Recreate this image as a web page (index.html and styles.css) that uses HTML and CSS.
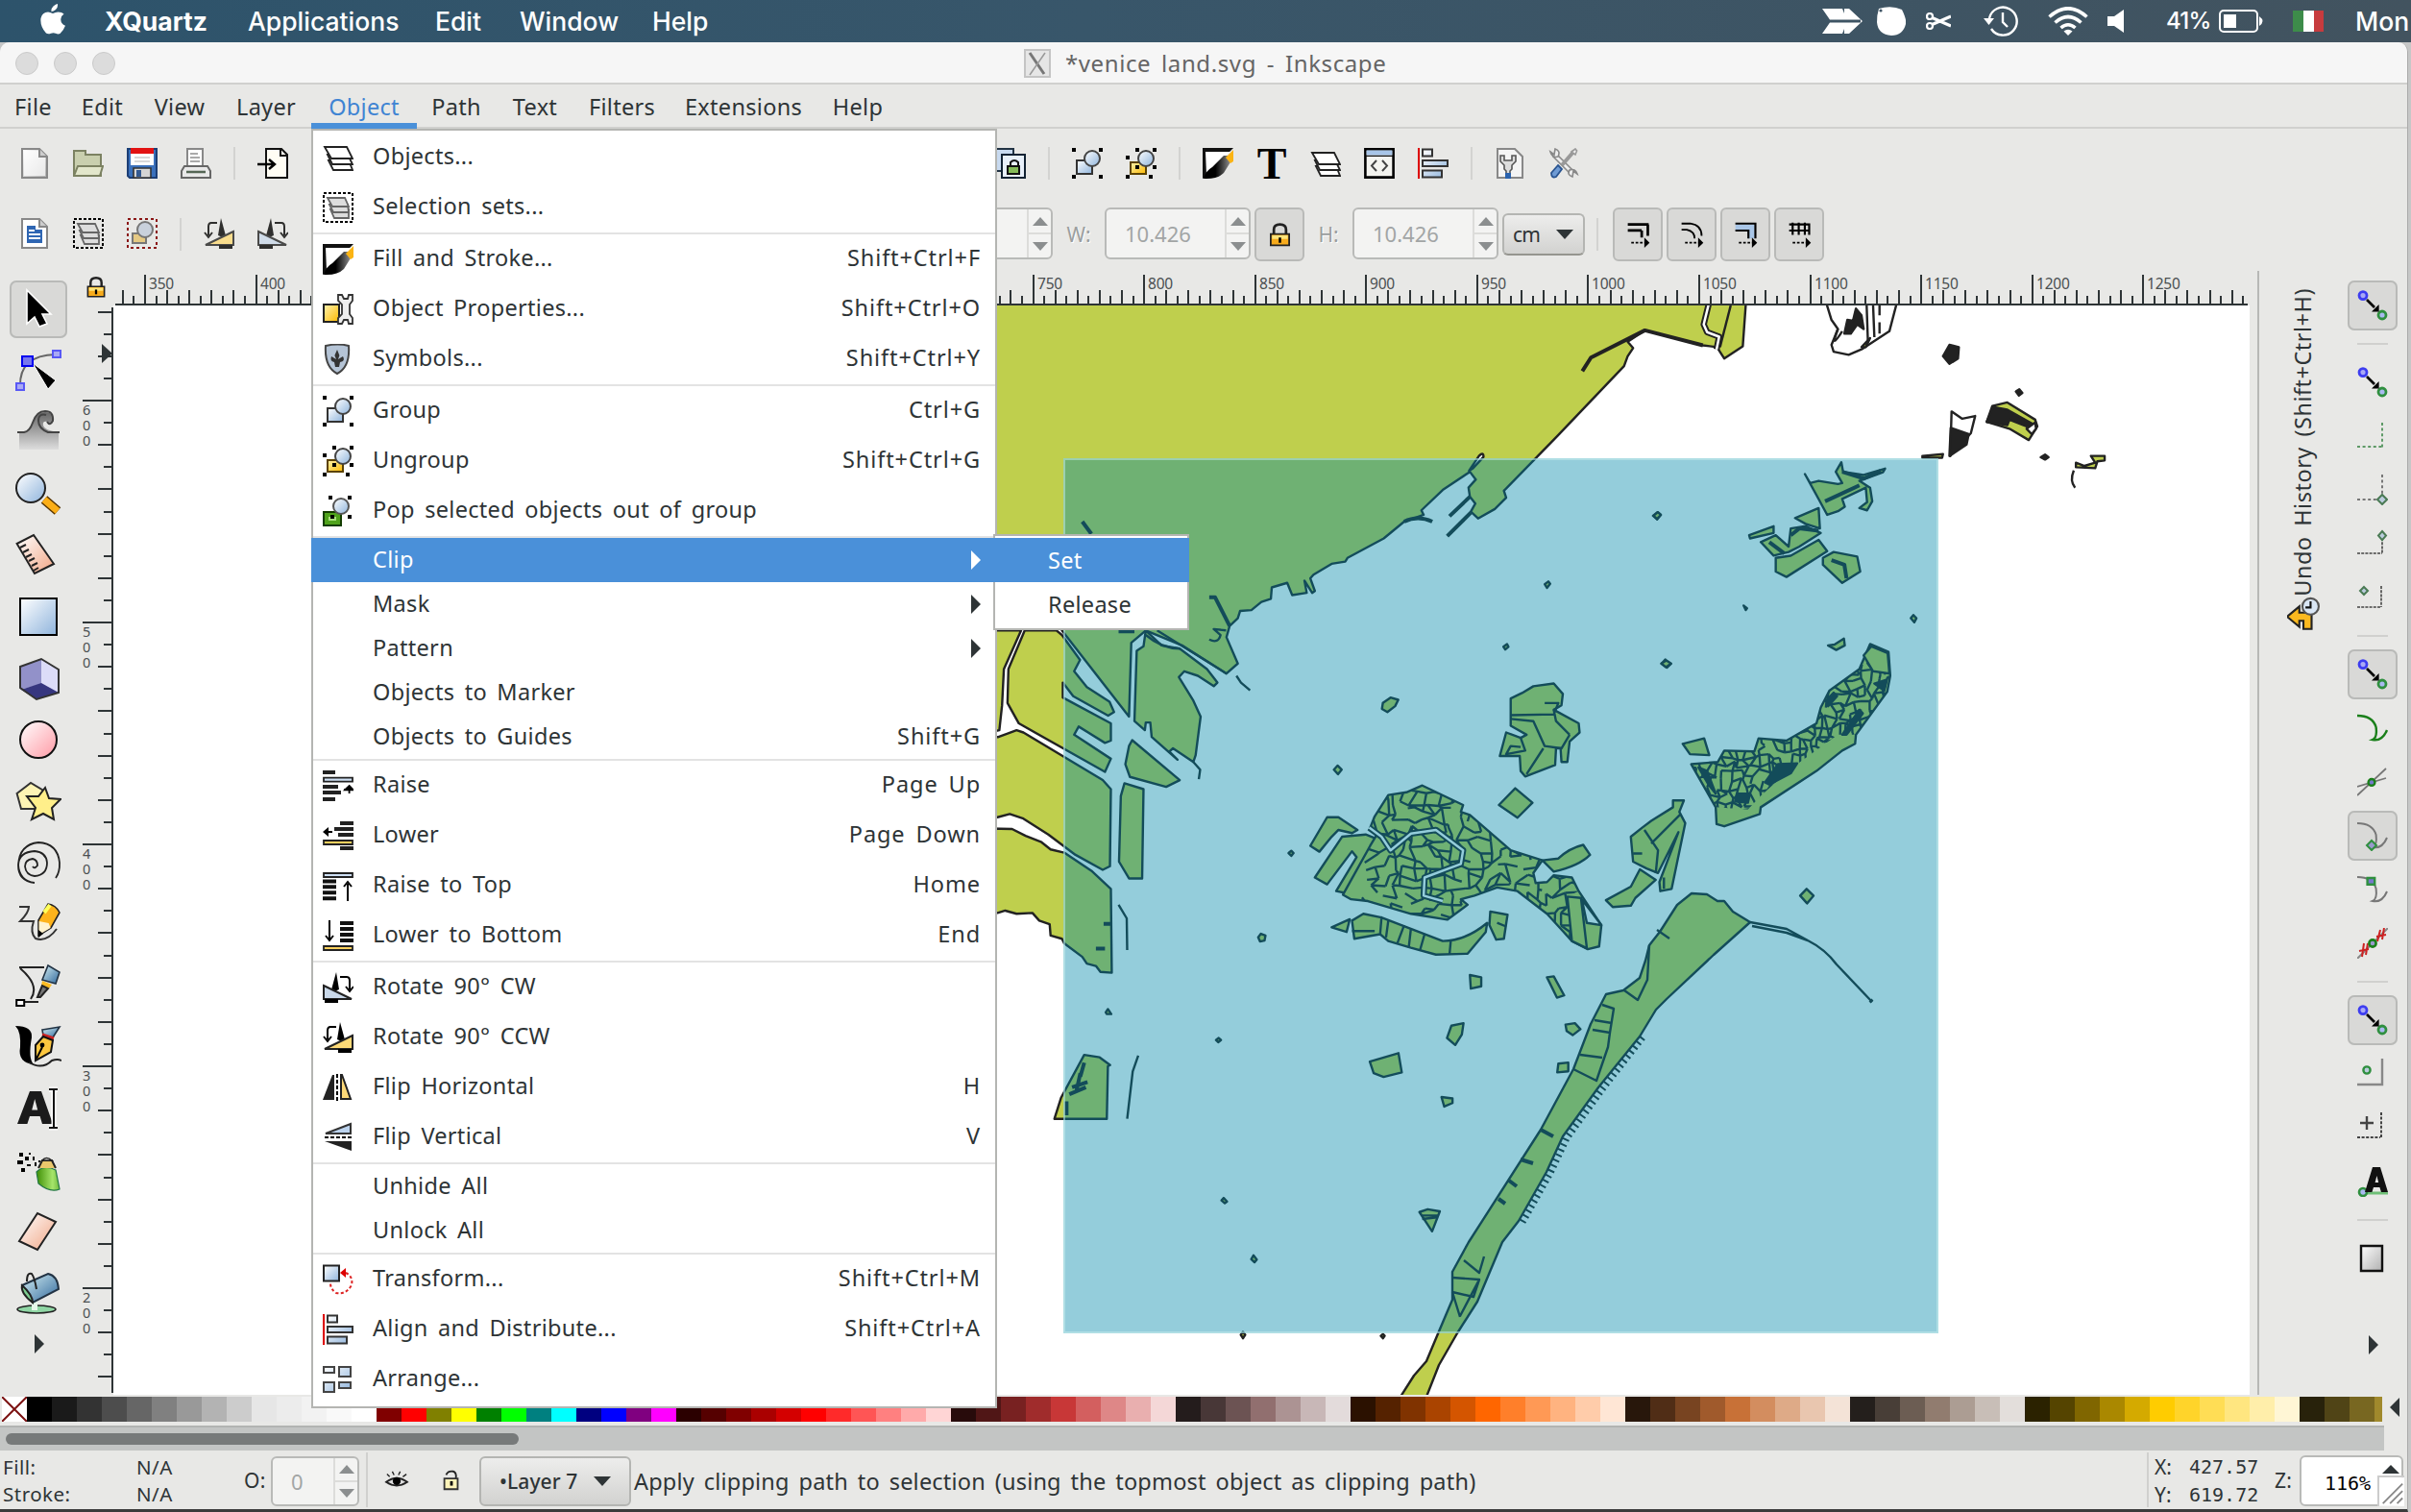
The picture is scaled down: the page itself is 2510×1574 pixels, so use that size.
FILE: index.html
```html
<!DOCTYPE html>
<html lang="en">
<head>
<meta charset="utf-8">
<title>*venice land.svg - Inkscape</title>
<link rel="stylesheet" href="styles.css">
</head>
<body>
<svg class="defs" width="0" height="0">
  <defs>
    <linearGradient id="gBlue" x1="0" y1="0" x2="1" y2="1"><stop offset="0" stop-color="#fff"/><stop offset="1" stop-color="#8fb4dc"/></linearGradient>
    <linearGradient id="gYellow" x1="0" y1="0" x2="1" y2="1"><stop offset="0" stop-color="#fff3b0"/><stop offset="1" stop-color="#fcb900"/></linearGradient>
    <linearGradient id="gPink" x1="0" y1="0" x2="1" y2="1"><stop offset="0" stop-color="#fff"/><stop offset="1" stop-color="#ff9aa5"/></linearGradient>
    <linearGradient id="gPeach" x1="0" y1="0" x2="1" y2="1"><stop offset="0" stop-color="#fff"/><stop offset="1" stop-color="#f0a584"/></linearGradient>
    <linearGradient id="gGrey" x1="0" y1="0" x2="1" y2="1"><stop offset="0" stop-color="#fff"/><stop offset="1" stop-color="#b0b0b0"/></linearGradient>
    <linearGradient id="gWave" x1="0" y1="0" x2="0" y2="1"><stop offset="0" stop-color="#666"/><stop offset="1" stop-color="#ddd"/></linearGradient>
    <linearGradient id="gInk" x1="1" y1="0" x2="0" y2="0"><stop offset="0" stop-color="#aaa"/><stop offset=".6" stop-color="#000"/></linearGradient>
    <linearGradient id="gSteel" x1="0" y1="0" x2="1" y2="1"><stop offset="0" stop-color="#d6f0f4"/><stop offset="1" stop-color="#2f679b"/></linearGradient>
    <linearGradient id="gGreen" x1="0" y1="0" x2="1" y2="0"><stop offset="0" stop-color="#3f8f05"/><stop offset=".7" stop-color="#a6e56b"/><stop offset="1" stop-color="#6fb93c"/></linearGradient>
  </defs>
  <symbol id="layers" viewBox="0 0 16 16"><g fill="#fff" stroke="#222" stroke-width=".9"><path d="M3 9.500l2.500 5h10l-2-5z"/><path d="M2.500 6.500l2.500 5h10.500L13 6.500z"/><path d="M1 2.500L4.500 8.500h11L12.500 2.500z"/></g></symbol>
  <symbol id="selset" viewBox="0 0 16 16"><path d="M.5.500h15v15H.5z" fill="none" stroke="#000" stroke-dasharray="1.500 1"/><g fill="#ddd" stroke="#666" stroke-width=".9"><path d="M4 9l2 4.500h7.500V9z"/><path d="M3.500 6.500l2 4h8l-.5-4z"/><path d="M2.500 3L5 7.500h8.500L11.500 3z"/></g></symbol>
  <symbol id="selgrp" viewBox="0 0 16 16"><path d="M.5.500h15v15H.5z" fill="none" stroke="#8a1616" stroke-dasharray="1.500 1.500"/><path d="M3 8h7v5H3z" fill="#e5c983" stroke="#777"/><circle cx="9.500" cy="6" r="4" fill="#c9d1dc" stroke="#777"/></symbol>
  <symbol id="fill" viewBox="0 0 16 16"><path d="M0 0h16L1 15.500 0 16z" fill="#111"/><path d="M1.500 2h13L2 14z" fill="#fff"/><path d="M.5 16q1-4 4.500-6l6-6h3l2 1-5 8q-3 3-9 3z" fill="url(#gInk)"/><path d="M12 5l4-4v6l-1.500 1z" fill="#fbb414"/></symbol>
  <symbol id="props" viewBox="0 0 16 16"><path d="M.5 5.500h8v9h-8z" fill="url(#gYellow)" stroke="#222"/><path d="M8 .5v3l2 2v5l-2 2v3h2l1-2h2l.5 2h2v-3l-1.500-2v-5l1.500-2v-3h-2l-.5 2h-2l-1-2z" fill="#eee" stroke="#333" stroke-width=".9"/></symbol>
  <symbol id="shield" viewBox="0 0 16 16"><path d="M1.500 1Q8-.5 13.500 1q.8 11-6 14.500Q.8 12 1.500 1z" fill="#b5c4d6" stroke="#444"/><path d="M7.500 3l1.200 3-.7 2 2.500-1.500q1.500 2.500-1.500 3l-.5 2.500h-2L6 9.500Q3.500 9 4.500 6.500L7 8 6.200 6z" fill="#333"/></symbol>
  <symbol id="group" viewBox="0 0 16 16"><path d="M2.500 6.500h8v7h-8z" fill="url(#gBlue)" stroke="#333"/><circle cx="10.500" cy="5.500" r="4" fill="url(#gBlue)" stroke="#444"/><path d="M0 0h2v2H0zM14 0h2v2h-2zM0 14h2v2H0zM14 14h2v2h-2z"/></symbol>
  <symbol id="ungroup" viewBox="0 0 16 16"><path d="M2.500 7.500h8v6h-8z" fill="url(#gYellow)" stroke="#5c4300"/><circle cx="10.500" cy="5.500" r="4" fill="url(#gBlue)" stroke="#444"/><path d="M5 0h2v2H5zM14 0h2v2h-2zM0 4h2v2H0zM14 9h2v2h-2zM0 14h2v2H0zM12 14h2v2h-2zM5 9h2v2H5z"/></symbol>
  <symbol id="pop" viewBox="0 0 16 16"><path d="M.5 8.500h9v7h-9z" fill="#4fa31c" stroke="#143d00"/><path d="M3 11h4v2H3z" fill="#a7e07c"/><circle cx="9.500" cy="5.500" r="4" fill="url(#gBlue)" stroke="#555"/><path d="M3 0h2v2H3zM13 0h2v2h-2zM4 10h2v2H4zM13 10h2v2h-2z"/></symbol>
  <symbol id="raise" viewBox="0 0 16 16"><path d="M0 1h6.500M0 8.500h8M0 11.500h9.500M0 15h6.500" stroke="#222" stroke-width="1.900"/><path d="M.5 3.800h15v2H.5z" fill="#cfe0f5" stroke="#222" stroke-width=".9"/><path d="M11 10h3M13.800 8l2.200 2.200h-4.500zM13.800 9v3" stroke="#000" stroke-width=".9"/></symbol>
  <symbol id="lower" viewBox="0 0 16 16"><path d="M9 1.500h7M6 4.500h10M8 7.500h8M9 14.500h7" stroke="#222" stroke-width="2"/><path d="M.5 10.500h15v2H.5z" fill="#fdd15e" stroke="#222" stroke-width=".9"/><path d="M0 6l3-2.500v2h2v1H3v2z"/></symbol>
  <symbol id="top" viewBox="0 0 16 16"><path d="M0 5.800h7M0 8.600h7M0 11.600h7M0 14.600h7" stroke="#111" stroke-width="2"/><path d="M.5 1.500h15v2H.5z" fill="#cfe0f5" stroke="#222" stroke-width=".9"/><path d="M13 16V7M11 8.500l2-2.500 2 2.500" fill="none" stroke="#000"/></symbol>
  <symbol id="bottom" viewBox="0 0 16 16"><path d="M9 1.500h7M9 4.500h7M9 7.500h7M9 10.500h7" stroke="#111" stroke-width="2"/><path d="M.5 13.500h15v2H.5z" fill="#fdd15e" stroke="#222" stroke-width=".9"/><path d="M3.500 0v10M1.500 8l2 2.500 2-2.500" fill="none" stroke="#000"/></symbol>
  <symbol id="rotcw" viewBox="0 0 16 16"><path d="M7 0l1.500 9L4 11z"/><path d="M.5 7L15 14H.5z" fill="#cad9ea" stroke="#222"/><path d="M1 14h7v2H1z"/><path d="M9 2.500h3.500q1.500 0 1.500 2V9M12 7.500l2 2.500 2-2.500" fill="none" stroke="#000"/></symbol>
  <symbol id="rotccw" viewBox="0 0 16 16"><path d="M9 0L7.500 9l4.500 2z"/><path d="M15.500 7L1 14h14.500z" fill="#fdda77" stroke="#222"/><path d="M8 14h7v2H8z"/><path d="M7 2.500H4Q2.500 2.500 2.500 4.500V9M.5 7.500l2 2.500 2-2.500" fill="none" stroke="#000"/></symbol>
  <symbol id="fliph" viewBox="0 0 16 16"><path d="M0 14.500h6V1.500H5z" fill="#222"/><path d="M9.500 14h5L10 1.500h-.5z" fill="#fdd978" stroke="#222"/><path d="M7.500 1v14" stroke="#000" stroke-dasharray="2 1"/></symbol>
  <symbol id="flipv" viewBox="0 0 16 16"><path d="M14.500 1v5H1.500z" fill="#bcd3ee" stroke="#333"/><path d="M15 15V10H1z" fill="#222"/><path d="M1 8h14" stroke="#000" stroke-dasharray="2 1"/></symbol>
  <symbol id="transform" viewBox="0 0 16 16"><path d="M.5.800h8v8h-8z" fill="url(#gBlue)" stroke="#222"/><path d="M12 4.500q4 2 3 6.500-3 5-8 4-3-2-3-5" fill="none" stroke="#d22" stroke-dasharray="1.500 1.200"/><path d="M9 4.500l3-2.500v5z" fill="#d00"/></symbol>
  <symbol id="align" viewBox="0 0 16 16"><path d="M.5 0v16" stroke="#d00"/><g fill="url(#gBlue)" stroke="#333"><path d="M2.500.800h5v3.500h-5zM2.500 6.500h13v3h-13zM2.500 11.800h10v3.500h-10z"/></g></symbol>
  <symbol id="arrange" viewBox="0 0 16 16"><g fill="url(#gBlue)" stroke="#444"><path d="M.5 1.500h5.500v3H.5zM8.500 1.500h6v5h-6zM.5 9.500h5.500v5H.5zM8.500 9.500h6v3h-6z"/></g></symbol>
  <symbol id="new" viewBox="0 0 16 16"><path d="M1.500.500h9l4 4v11h-13z" fill="url(#gGrey)" stroke="#888"/><path d="M2.500 1.500h8v3h3v10h-11z" fill="#fff" opacity=".7"/><path d="M10.500.500v4h4" fill="#ccc" stroke="#888"/></symbol>
  <symbol id="open" viewBox="0 0 16 16"><path d="M.5 14.500v-13h6v2h8v11z" fill="#c9cfae" stroke="#7c8262"/><path d="M2.500 9.500h13l-1.500 5H.5z" fill="#e2e6cb" stroke="#7c8262"/></symbol>
  <symbol id="save" viewBox="0 0 16 16"><path d="M.5.500h15v15h-14l-1-1z" fill="#3a70bb" stroke="#1c3e75"/><path d="M2 0h12v9H2z" fill="#fff"/><path d="M2 0h12v3H2z" fill="#e21212"/><path d="M4 5h8M4 7h8" stroke="#ccc" stroke-width=".7"/><path d="M3.500 10.500h9v5h-9z" fill="#d5d5d5" stroke="#333" stroke-width=".8"/><path d="M5 11.500h2.500V15H5z" fill="#345a91"/></symbol>
  <symbol id="print" viewBox="0 0 16 16"><path d="M3.500.500h8v9h-8z" fill="#fff" stroke="#888"/><path d="M5 3h4M5 5h5M5 7h5" stroke="#aaa"/><path d="M2 9.500h12l1.500 2.500v3.500H.5V12z" fill="#e9e9e9" stroke="#666"/><path d="M3 12.500h10" stroke="#565" stroke-width="1.200"/></symbol>
  <symbol id="import" viewBox="0 0 16 16"><path d="M4.500.500h8l3 3v12h-11z" fill="#fffdf4" stroke="#111"/><path d="M12 .5v3.500h3.500" fill="none" stroke="#111"/><path d="M0 8.500h8M6 6l3 2.500L6 11" fill="none" stroke="#000" stroke-width="1.200"/></symbol>
  <symbol id="clone" viewBox="0 0 16 16"><path d="M0 .5h9.500V12H0z" fill="#c8daf0" stroke="#234"/><path d="M3.500 3.500h12v12h-12z" fill="#e8f0fa" stroke="#123"/><path d="M6.500 9.500h6v4h-6z" fill="#86bb59" stroke="#111"/><path d="M8 9V7.500q2-2 4 0V9" fill="none" stroke="#111"/></symbol>
  <symbol id="xml" viewBox="0 0 16 16"><path d="M.7.700h14.600v14.600H.7z" fill="#f4f4f0" stroke="#000" stroke-width="1.300"/><path d="M1.300 1.300h13.400v2.500H1.300z" fill="#a8c5e8"/><path d="M1 4.200h14" stroke="#111" stroke-width=".7"/><path d="M6.500 6.500L4 9.300 6.500 12M9.500 6.500L12 9.300 9.500 12" fill="none" stroke="#444"/></symbol>
  <symbol id="docprefs" viewBox="0 0 16 16"><path d="M1.500.500h9l4 4v11h-13z" fill="#f4f4f4" stroke="#888"/><path d="M3 4v3l2 2v2l1 1v3h2v-3l1-1V9l2-2V4H9v2.500H5V4z" fill="#ddd" stroke="#555" stroke-width=".8"/><path d="M5.500 13h3v3h-3z" fill="#2a62ad"/></symbol>
  <symbol id="prefs" viewBox="0 0 16 16"><path d="M3 3.500l9.500 9.500" stroke="#888" stroke-width="3"/><path d="M3 3.500l9.500 9.500" stroke="#eee" stroke-width="1.400"/><path d="M1 2l2 1.500L3.500.5q3 1 1.500 4-3 1-4-2.500zM15 13.500l-2-1.500-.5 3q-3-1-1.500-3.500 3-1 4 2z" fill="#eee" stroke="#888" stroke-width=".8"/><path d="M13.500 1.500L7 9" stroke="#999" stroke-width="2"/><path d="M12 2l2-1.500.8 1L14 3.500z" fill="#eee" stroke="#999" stroke-width=".8"/><path d="M5 9l2 2-3 4q-2.500 1-2.500-2z" fill="#6f9bd4" stroke="#2a5591" stroke-width=".9"/></symbol>
  <symbol id="seldoc" viewBox="0 0 16 16"><path d="M1.500.500h9l4 4v11h-13z" fill="#fff" stroke="#888"/><path d="M10.500.500v4h4" fill="#ccc" stroke="#888"/><path d="M4 4h4.500v2H12v7H4z" fill="#2f66b3"/><path d="M5 6.500h3M5 8.500h6M5 10.500h6" stroke="#fff"/></symbol>
  <symbol id="lock" viewBox="0 0 16 16"><path d="M4.500 8V5q0-3 3.500-3t3.500 3v3" fill="none" stroke="#222" stroke-width="1.500"/><path d="M2.700 7.500h10.600v6.500H2.700z" fill="#f7ab1c" stroke="#222"/><path d="M3.500 8.300h9v2h-9z" fill="#ffe47a"/><path d="M7.300 9.500h1.400v3H7.300z"/></symbol>
  <symbol id="m1" viewBox="0 0 16 16"><path d="M2 2h12M2 5.500h8M13.500 2v6.500M10 5.500v4" stroke="#000" stroke-width="1.500" fill="none"/><path d="M4 12.500h8" stroke="#000" stroke-dasharray="1.500 1"/><path d="M11.500 9.500l3 3-3 3z"/></symbol>
  <symbol id="m2" viewBox="0 0 16 16"><path d="M2 1.500h5q6.500 1 6.500 7M2 5h3q4.500 1 4.500 5" stroke="#000" fill="none"/><path d="M4 12.500h8" stroke="#000" stroke-dasharray="1.500 1"/><path d="M11.500 9.500l3 3-3 3z"/></symbol>
  <symbol id="m3" viewBox="0 0 16 16"><path d="M2 2h11v8H9V5.500H2z" fill="#a9c6e7"/><path d="M2 1.500h11.500v8.500M2 5.500h7.500v4.500" stroke="#000" fill="none" stroke-width="1.200"/><path d="M4 12.500h8" stroke="#000" stroke-dasharray="1.500 1"/><path d="M11.500 9.500l3 3-3 3z"/></symbol>
  <symbol id="m4" viewBox="0 0 16 16"><path d="M2 2h11.500v6M2 5.500h11.500M4 1v7M7.500 1v7M11 1v7" stroke="#000" fill="none" stroke-width="1.200"/><path d="M4 12.500h8" stroke="#000" stroke-dasharray="1.500 1"/><path d="M11.500 9.500l3 3-3 3z"/></symbol>
  <symbol id="snap" viewBox="0 0 16 16"><circle cx="3" cy="2.800" r="2" fill="#a9a9f5" stroke="#3d3df0" stroke-width="1.400"/><circle cx="13" cy="13" r="2" fill="#a9b9f0" stroke="#2f8f3f" stroke-width="1.400"/><path d="M5 5l4 4" stroke="#000" stroke-width="1.300"/><path d="M11.300 11.300H7.500l3.800-3.800z"/></symbol>
  <symbol id="s1" viewBox="0 0 16 16"><path d="M13 1v13M0 13.500h13" fill="none" stroke="#5e9a67" stroke-dasharray="1.500 1.300"/></symbol>
  <symbol id="s2" viewBox="0 0 16 16"><path d="M13 0v11M0 13h11" fill="none" stroke="#777" stroke-dasharray="1.500 1.300"/><path d="M13 10.500l2.500 2.500-2.500 2.500-2.500-2.500z" fill="#bcd" stroke="#4a7a54"/></symbol>
  <symbol id="s3" viewBox="0 0 16 16"><path d="M13 5v8M0 13h13" fill="none" stroke="#444" stroke-dasharray="1.500 .6" stroke-width=".8"/><path d="M13 1.500l2 2.300-2 2.300-2-2.300z" fill="#bcd" stroke="#4a7a54"/></symbol>
  <symbol id="s4" viewBox="0 0 16 16"><path d="M12.500 2v11M0 13h12" fill="none" stroke="#444" stroke-dasharray="1.500 .6" stroke-width=".8"/><path d="M3.500 2.500l2 2-2 2-2-2z" fill="#bcd" stroke="#4a7a54"/></symbol>
  <symbol id="s5" viewBox="0 0 16 16"><path d="M0 1.500q8 0 9.800 6Q10.500 13 8 14q5 1 7.500-5" fill="none" stroke="#1a7f1a" stroke-width="1.200"/></symbol>
  <symbol id="s6" viewBox="0 0 16 16"><path d="M0 15L15 1M0 10.500L15 6" stroke="#777" stroke-width=".9"/><circle cx="7.500" cy="8.200" r="1.700" fill="#77c" stroke="#1a7f1a" stroke-width="1.200"/></symbol>
  <symbol id="s7" viewBox="0 0 16 16"><path d="M0 1.500q8 0 9.800 6Q10.500 13 8 14q5 1 7.500-5" fill="none" stroke="#777"/><path d="M7.500 10.500l2.500 2.500-2.500 2.500L5 13z" fill="#99c" stroke="#2f8f3f"/></symbol>
  <symbol id="s8" viewBox="0 0 16 16"><path d="M0 1.500q8 0 9.800 6Q10.500 13 8 14q5 1 7.500-5" fill="none" stroke="#777"/><path d="M5.300 2h3.800v3.400H5.300z" fill="#77c" stroke="#2f8f3f" stroke-width="1.200"/></symbol>
  <symbol id="s9" viewBox="0 0 16 16"><path d="M0 16L16 0" stroke="#888"/><path d="M2.500 15l1-7M4.500 14l1-6M1 12l5-1M10.500 7l1.500-6M13 6l1-6M10 4.500l5-1" stroke="#c22"/><circle cx="8" cy="8" r="1.800" fill="#99c" stroke="#1a7f1a" stroke-width="1.300"/></symbol>
  <symbol id="s10" viewBox="0 0 16 16"><path d="M13 0v13.500H0" fill="none" stroke="#888" stroke-width="1.200"/><circle cx="5" cy="6" r="1.800" fill="#bcd" stroke="#2f8f3f" stroke-width="1.200"/></symbol>
  <symbol id="s11" viewBox="0 0 16 16"><path d="M12.500 0v13M0 13h12" fill="none" stroke="#444" stroke-dasharray="1.500 .8"/><path d="M5 2v7M1.500 5.500h7" stroke="#444" stroke-width="1.200"/></symbol>
  <symbol id="s12" viewBox="0 0 16 16"><path d="M3 14h13" stroke="#6fbf77" stroke-width="1.500"/><circle cx="3" cy="13.500" r="2" fill="#a9b9f0" stroke="#2f8f3f" stroke-width="1.300"/><path d="M4 13.500L8 .5h4l4 13h-3.500l-.8-2.500H8.500L7.700 13.500zM9.300 8.500h1.800L10.200 5z" fill-rule="evenodd" fill="#111"/></symbol>
  <symbol id="s13" viewBox="0 0 16 16"><path d="M2 1.500h11v13H2z" fill="url(#gGrey)" stroke="#111" stroke-width="1.200"/></symbol>
  <symbol id="undo" viewBox="0 0 16 16"><path d="M0 9.500l6-5v3h6v8H8v-4H6v3z" fill="#fbb91f" stroke="#222"/><circle cx="11.500" cy="4.500" r="4" fill="#d9e6f5" stroke="#555"/><path d="M11.500 2v3H9" fill="none" stroke="#111"/></symbol>
</svg>

<header class="macbar">
  <svg class="apple" viewBox="0 0 26 32"><path d="M18 0q.5 4-2 6t-4.500 2Q11 5 13.500 2.500T18 0zM24.500 10.500Q21 13 21.300 16.500 21.500 21 26 22.700 24 28 20.500 31q-2 1-4.500-.3-2.500-1-5 .1Q8 32 6 30.500-.5 23.500.5 15 2 8.500 8 8.500q2 .1 5 1.500 3-1.500 5.500-1.500 4 .2 6 2z" fill="#fff"/></svg>
  <b class="mb-app">XQuartz</b><span class="mb-2">Applications</span><span class="mb-3">Edit</span><span class="mb-4">Window</span><span class="mb-5">Help</span>
  <div class="tray">
    <svg class="t1" viewBox="0 0 42 26"><path d="M0 0h21l2 5V0h5l14 13-14 13h-5v-5l-2 5H0l8-11.500H40v-3H8z" fill="#fff"/></svg>
    <svg class="t2" viewBox="0 0 30 30"><path d="M2 2q13-4 24 1 5 10 4 15-3 12-15 12Q1 29 0 16 0 8 2 2z" fill="#fff"/><circle cx="4" cy="4" r="1.600" fill="#3f5465"/></svg>
    <svg class="t3" viewBox="0 0 26 18"><g fill="none" stroke="#fff" stroke-width="2.200"><circle cx="4" cy="4" r="3"/><circle cx="4" cy="14" r="3"/><path d="M6.500 5.500L26 14M6.500 12.500L26 4" stroke-width="3"/></g></svg>
    <svg class="t4" viewBox="0 0 36 32"><g fill="none" stroke="#fff" stroke-width="2.400"><path d="M6 13A14.500 14.500 0 1 1 8 24"/><path d="M20 7v10l5 5"/></g><path d="M0 13h11l-5.500 7z" fill="#fff"/></svg>
    <svg class="t5" viewBox="0 0 42 30"><g fill="none" stroke="#fff" stroke-width="3.600"><path d="M1.500 10.500Q21-7 40.500 10.500"/><path d="M7.500 16.500Q21 4.500 34.500 16.500"/><path d="M13.500 22Q21 15.500 28.500 22"/></g><path d="M21 30l-4.500-4.500q4.500-3.500 9 0z" fill="#fff"/></svg>
    <svg class="t6" viewBox="0 0 17 24"><path d="M0 7h7l10-7v24L7 17H0z" fill="#fff"/></svg>
    <span class="t7">41%</span>
    <svg class="t8" viewBox="0 0 46 24"><rect x="1" y="1" width="39" height="22" rx="4" fill="none" stroke="#fff" stroke-width="2"/><path d="M5 5h13v14H5z" fill="#fff"/><path d="M42 7q7 5 0 10z" fill="#fff"/></svg>
    <svg class="t9" viewBox="0 0 32 22"><path d="M0 0h11v22H0z" fill="#3d8c4a"/><path d="M11 0h11v22H11z" fill="#fff"/><path d="M22 0h10v22H22z" fill="#c73b3e"/></svg>
    <span class="t10">Mon</span>
  </div>
</header>

<div class="window">
  <div class="titlebar"><i class="light"></i><i class="light"></i><i class="light"></i>
    <div class="title"><svg width="28" height="30" viewBox="0 0 28 30"><path d="M1 1h26v28H1z" fill="#e6e6e6" stroke="#c4c4c4" stroke-width="2"/><path d="M6 4l15 22" stroke="#777" stroke-width="3"/><path d="M22 4L6 27" stroke="#999" stroke-width="1.500"/></svg><span>*venice land.svg - Inkscape</span></div>
  </div>
  <nav class="menubar"><span class="w69">File</span><span class="w75">Edit</span><span class="w86">View</span><span class="w94">Layer</span><span class="w110 active">Object</span><span class="w82">Path</span><span class="w82">Text</span><span class="w99">Filters</span><span class="w154">Extensions</span><span class="w84">Help</span></nav>

  <div class="commands">
    <svg class="ic"><use href="#new"/></svg><svg class="ic"><use href="#open"/></svg><svg class="ic"><use href="#save"/></svg><svg class="ic"><use href="#print"/></svg><i class="vs"></i><svg class="ic"><use href="#import"/></svg>
    <i class="gapbig"></i>
    <svg class="ic"><use href="#clone"/></svg><i class="vs"></i><svg class="ic"><use href="#group"/></svg><svg class="ic"><use href="#ungroup"/></svg><i class="vs"></i><svg class="ic"><use href="#fill"/></svg><span class="ic bigT">T</span><svg class="ic"><use href="#layers"/></svg><svg class="ic"><use href="#xml"/></svg><svg class="ic"><use href="#align"/></svg><i class="vs"></i><svg class="ic"><use href="#docprefs"/></svg><svg class="ic"><use href="#prefs"/></svg>
  </div>

  <div class="options">
    <div class="optleft"><svg class="ic"><use href="#seldoc"/></svg><svg class="ic"><use href="#selset"/></svg><svg class="ic"><use href="#selgrp"/></svg><i class="vs"></i><svg class="ic dim"><use href="#rotccw"/></svg><svg class="ic dim"><use href="#rotcw"/></svg></div>
    <div class="spin"><span></span><i class="updown"><b></b><b></b></i></div>
    <label class="dimlabel w54">W:</label>
    <div class="spin"><span>10.426</span><i class="updown"><b></b><b></b></i></div>
    <div class="tog"><svg class="ic"><use href="#lock"/></svg></div>
    <label class="dimlabel w50">H:</label>
    <div class="spin"><span>10.426</span><i class="updown"><b></b><b></b></i></div>
    <div class="combo cm">cm<i class="down"></i></div>
    <i class="vs tall"></i>
    <div class="tog"><svg class="ic"><use href="#m1"/></svg></div><div class="tog"><svg class="ic"><use href="#m2"/></svg></div><div class="tog"><svg class="ic"><use href="#m3"/></svg></div><div class="tog"><svg class="ic"><use href="#m4"/></svg></div>
  </div>

  <main class="work">
    <div class="toolbox">
      <div class="tool on"><svg viewBox="0 0 24 24"><path d="M6 2v17.500l4-3.500 2.500 5 4-1.500-2.500-5h4.500z" fill="#000" stroke="#fff" stroke-width=".8"/></svg></div>
      <div class="tool"><svg viewBox="0 0 24 24"><path d="M2.500 20Q2 4 21 3.500" fill="none" stroke="#666"/><path d="M9 8l12 9-4 4.500z" fill="#000" stroke="#fff" stroke-width=".5"/><g fill="#a9a9f5" stroke="#5858f5"><path d="M.5 18.500h4v3.500h-4zM19.500 1.500h4v3.500h-4z"/><path d="M3.500 4.500h5.500v5H3.500z" stroke="#0000f0" fill="#7777ee"/></g></svg></div>
      <div class="tool"><svg viewBox="0 0 24 24"><path d="M2 12h2.500q3-.5 4.500-5Q11 1.500 15.500 1.500t4 4.500q-1.500 3-3 .5-2.500-.5-2 2t8 3.500v9H2z" fill="url(#gWave)"/><path d="M1 12h3.500q3-.5 4.500-5Q11 1 15.500 1t4 5q-1.500 3-3 .5M16 3q-4-1-4 3t5 6h6" fill="none" stroke="#444"/></svg></div>
      <div class="tool"><svg viewBox="0 0 24 24"><path d="M15 15l7 6" stroke="#553300" stroke-width="5"/><path d="M15 15l7 6" stroke="#fbae17" stroke-width="3.500"/><circle cx="8" cy="9" r="7.500" fill="url(#gBlue)" stroke="#222"/></svg></div>
      <div class="tool"><svg viewBox="0 0 24 24"><path d="M.8 6L9.500 1.500 20 16.500l-10 5z" fill="url(#gPeach)" stroke="#222"/><path d="M2.500 8l3-1.500M4 10.500l3-1.500M5.500 13l3-1.500M7 15l3-1.500M8.500 17.500l3-1.500M9.500 20l2.500-1.500" stroke="#222"/></svg></div>
      <div class="tool"><svg viewBox="0 0 24 24"><path d="M2.500 2.500h19v19h-19z" fill="url(#gBlue)" stroke="#000"/></svg></div>
      <div class="tool"><svg viewBox="0 0 24 24"><path d="M2.500 6l11-4 9 5.500v12L11 23 2.500 17z" fill="#dcdcf8"/><path d="M2.500 6l11-4v13L2.500 18z" fill="#9291c9"/><path d="M13.500 14.500l9 5L11 23l-8-5z" fill="#36367f"/><path d="M2.500 6l11-4 9 5.500v12L11 23 2.500 17z" fill="none" stroke="#333"/></svg></div>
      <div class="tool"><svg viewBox="0 0 24 24"><circle cx="12" cy="12" r="9.500" fill="url(#gPink)" stroke="#111"/></svg></div>
      <div class="tool"><svg viewBox="0 0 24 24"><path d="M.8 8L8 2.500 15.500 7l-2.500 9H3z" fill="#fdf4b4" stroke="#333"/><path d="M6 9.500h6l3.500-4.500 2 5.500 6 .5-4.500 4.500 1 6-5.500-3-6 3 2-6z" fill="#ffef8a" stroke="#222"/></svg></div>
      <div class="tool"><svg viewBox="0 0 24 24"><path d="M9 14q1 1.500 2.500-.5 0-3-2.500-3.500-4 .5-4 4 .5 4.500 5 5 6.500-.5 6.500-7Q16 6.500 10 6 2 6.500 1.500 13 2 21.500 10 22.500M10 22.500Q1.500 21.500 1.500 13.500 2 2.500 12 1.500q10 .5 11 10.500.2 5-2 8" fill="none" stroke="#222" stroke-width=".9"/></svg></div>
      <div class="tool"><svg viewBox="0 0 24 24"><path d="M2 3h5q0 3-4.500 7.500h7q-2 6 1 9 6 2 11-5" fill="none" stroke="#333"/><path d="M12 18V10l5-8.500q4 .5 6 4.500L18.500 14z" fill="#fdb31c" stroke="#222" stroke-width=".8"/><path d="M12.300 10.500l5 1 1 2.500-6 3.500z" fill="#fff3cf"/><path d="M15 6l3-4" stroke="#ffff5a" stroke-width="2"/><path d="M12 19v-4l2.500 2z"/></svg></div>
      <div class="tool"><svg viewBox="0 0 24 24"><path d="M2 2.500h13M2.500 3Q13 12 8 19M3 20.500h9" fill="none" stroke="#222"/><path d="M17 1.500l6 3.500-2 6-7-2z" fill="url(#gSteel)" stroke="#234" stroke-width=".8"/><path d="M14 9.500l5 2-1.500 2-4-1.500z" fill="#fbbb22"/><path d="M14 12l-2.500 6h1.500l4-4.500z" fill="#777" stroke="#222"/><path d="M.6 19.500h4v3h-4z" fill="#fff" stroke="#000"/></svg></div>
      <div class="tool"><svg viewBox="0 0 24 24"><path d="M0 1q9 0 8.500 6-2 11 1 14Q1 20 2.500 12 3 4 0 1z"/><path d="M7 20q7 4 12-1 3-1 5 0" fill="none" stroke="#222"/><path d="M14 3l9-1.500L19.500 7l-5-1z" fill="url(#gSteel)" stroke="#234" stroke-width=".8"/><path d="M14 5.500l6 2" stroke="#c22" stroke-width="1.500"/><path d="M10.500 19V11l4-4.500 5 2-1 6z" fill="#fdc73f" stroke="#111"/><path d="M11 18l3-6" stroke="#000"/><circle cx="14" cy="11" r="1.200"/></svg></div>
      <div class="tool"><svg viewBox="0 0 24 24"><path d="M1 20L7.500 3h6l6 17h-5.500l-1.200-4H7.500L6.200 20zM8.600 12.800h3L10.100 7z" fill="#1b1b1b" fill-rule="evenodd"/><path d="M17.500 2h4.500M17.500 22h4.500M20 2v20" stroke="#fff" stroke-width="2.500"/><path d="M17.500 2h4.500M17.500 22h4.500M20 2v20" stroke="#111"/></svg></div>
      <div class="tool"><svg viewBox="0 0 24 24"><path d="M2 3h2v2H2zM5 5h2v2H5zM1 7h3v2H1zM7 3h1v1H7zM3 11h2v2H3zM6 9h2v1H6zM9 5h1v2H9zM10 8h1v2h-1zM12 7h1v1h-1z"/><path d="M11 13q4-4 10-1l2 10q-5 2-11-3z" fill="url(#gGreen)" stroke="#274" stroke-width=".6"/><path d="M12 11l2-4h5l2 4" fill="#e9c76c" stroke="#222"/><path d="M14 7q2-2.500 5 0z" fill="#fff" stroke="#222" stroke-width=".8"/></svg></div>
      <div class="tool"><svg viewBox="0 0 24 24"><path d="M2 17L11.500 2.500l9.500 4.500-9.500 14.500z" fill="url(#gPeach)" stroke="#222"/></svg></div>
      <div class="tool"><svg viewBox="0 0 24 24"><ellipse cx="11" cy="20.500" rx="10" ry="2" fill="#8fd6a4" stroke="#222" stroke-width=".8"/><path d="M8.500 14v7h3v-5z" fill="#e6f7ea"/><path d="M3.500 8L17 2q5 1 5.500 8L9 17z" fill="url(#gSteel)" stroke="#234"/><path d="M3.500 8q-1 4 5.500 9 0-4-5.500-9z" fill="#7ccd8f" stroke="#222"/><path d="M6 6q0-5 2.500-4Q10 4 11 10" fill="none" stroke="#222"/></svg></div>
      <i class="right"></i>
    </div>
    <div class="vcol"><div class="corner"><svg width="28" height="26"><use href="#lock"/></svg></div><svg id="vruler" width="42" height="1134" viewBox="76 318 42 1134"></svg></div>
    <div class="center">
      <svg id="hruler" width="2224" height="36" viewBox="118 282 2224 36"></svg>
      <svg class="canvas" width="2224" height="1134" viewBox="118 318 2224 1134">
        <defs>
          <clipPath id="cVen"><path d="M840 1190L850 1165 880 1118 920 1112 955 1097 1045 1140 1040 1155 1060 1162 1150 1240 1220 1262 1200 1290 1205 1312 1230 1310 1245 1295 1285 1300 1300 1330 1275 1342 1285 1440 1265 1418 1230 1380 1165 1330 1120 1322 1070 1340 1040 1348 1055 1360 1010 1393 930 1380 835 1352 798 1348 780 1338 840 1230 855 1205z"/></clipPath>
          <clipPath id="cArc"><path d="M665 785L708 802 712 855 705 890 632 985 590 985 480 1060 410 1120 380 1150 305 1145 248 1050 310 1045 325 1020 395 1022 405 993 470 998 540 960 550 925 570 888 640 840z"/></clipPath>
        </defs>
        <g class="land" transform="translate(1030 300) scale(.47194)">
          <path d="M0 30H1669L1662 128 1621 155 1605 130 1574 126 1446 93 1408 118 1420 132 1408 150 1400 172 1254 325 1135 447 1140 462 1115 487 1078 508 1062 493 1072 475 1060 460 1057 440 1073 422 1060 405 1000 445 953 490 958 500 915 515 870 552 790 595 785 603 755 608 715 632 708 640 718 668 712 672 695 645 700 672 668 677 657 650 623 660 621 685 600 692 578 710 553 712 548 728 530 745 523 770 548 828 523 850 425 788 345 755 313 782 308 945 160 755 150 700H0z"/>
          <path d="M325 800L340 790 345 755 380 788 420 795 480 840 503 870 495 878 460 855 430 845 418 858 450 910 466 945 455 1030 450 1045 405 1015 397 1022 415 1040 358 990 355 958 345 958 343 975 320 955z"/>
          <path class="ln" d="M450 1045L465 1062 462 1083"/>
          <path d="M78 755L42 840 40 915 65 960 255 1067 268 1038 187 985 197 967 255 1003 268 998V960L162 903V870L185 900 262 943 275 935 265 912 215 880 187 845 200 820 160 765 148 755z"/>
          <path d="M0 755H70L32 840 28 920 22 975 0 980z"/>
          <path d="M0 990H20L60 975 75 980 250 1085 268 1105 266 1275 250 1283 190 1250 130 1205 75 1170 45 1160 18 1167H0z"/>
          <path d="M0 1192L50 1193 80 1208 115 1222 135 1238 165 1245 225 1285 268 1325 270 1510 245 1508 235 1495 215 1490 205 1475 165 1445 160 1435 135 1428 133 1403 110 1395 95 1378 60 1380 35 1373 18 1378H0z"/>
          <path d="M315 997L420 1085 390 1100 310 1078 300 1050 308 1010zM298 1092L340 1105 337 1302H308L286 1265 290 1120z"/>
          <path class="ln" d="M285 1360L303 1390 304 1460M545 855L555 870 575 887M485 775Q505 785 510 765L495 752 522 755M370 755L523 850M345 765Q380 795 420 795"/>
          <path class="thick" d="M205 515L225 542M485 682H498L530 745M915 515Q945 500 977 515M1308 183L1327 153 1446 93 1574 126M285 757H320M252 1402H268M235 1457H255M1015 503L1060 460M1010 547L1062 495"/>
          <path class="water" d="M1058 403L1080 370Q1090 360 1090 372L1066 398z"/>
          <path d="M868 915L885 903 902 908 895 922 878 935 866 928zM760 1062l8-9 9 9-8 10zM660 1246l6-5 5 5-5 6zM593 1432l6-8 10 4-2 11-10 2zM1225 653l8-6 4 5-7 9zM1464 502l10-8 7 6-8 10zM1134 791l8-6 3 6-7 6zM1483 828l8-9 5 9 7 1-8 8zM1160 1103L1198 1135 1165 1168 1124 1140z"/>
          <path d="M1150 905L1175 893 1200 878 1245 872 1265 895 1262 920 1245 930 1300 960 1302 980 1280 1000 1275 1045H1262L1260 1015H1250L1248 1052 1182 1077 1172 1065 1170 1032H1126L1140 980 1172 992 1185 985 1150 965z"/>
          <path class="ln" d="M1150 942L1245 940 1255 915 1225 915M1245 930L1250 955 1280 985M1150 950L1200 955 1225 1010 1262 1015 1280 985M1222 1015L1185 1072M1172 992L1182 1020 1140 1028 1150 1010 1172 1012"/>
          <path d="M708 1230L745 1167H770L812 1195 800 1202 770 1195 755 1210 728 1243zM718 1300L778 1210 830 1205 855 1215 790 1335 765 1330 810 1255 800 1242 745 1315zM1220 1262L1255 1258Q1280 1235 1310 1228L1325 1250Q1300 1275 1245 1287z"/>
          <path d="M755 1410L795 1392 788 1420zM800 1395L825 1380 865 1388 862 1425 805 1435zM865 1388L1000 1440Q1050 1440 1098 1400L1095 1420 1055 1468 985 1470 930 1455 880 1440 862 1425zM1105 1375L1143 1382 1135 1435 1118 1437 1103 1405z"/>
          <path class="ln" d="M915 1405L900 1445M960 1425L950 1460M1018 1438L1015 1470M800 1418H850M930 1412L925 1455M880 1395L875 1432M1120 1400L1140 1408"/>
          <path d="M840 1190L850 1165 880 1118 920 1112 955 1097 1045 1140 1040 1155 1060 1162 1150 1240 1220 1262 1200 1290 1205 1312 1230 1310 1245 1295 1285 1300 1300 1330 1350 1405 1345 1452 1320 1458 1285 1440 1265 1418 1230 1380 1165 1330 1120 1322 1070 1340 1040 1348 1055 1360 1010 1393 930 1380 835 1352 798 1348 780 1338 840 1230 855 1205z"/>
          <g id="meshVen" clip-path="url(#cVen)"></g>
          <path class="bank" d="M838 1190L865 1210 885 1240 930 1203 985 1195 1045 1240 1040 1270 960 1300 958 1340 1000 1352"/>
          <path class="canal" d="M838 1190L865 1210 885 1240 930 1203 985 1195 1045 1240 1040 1270 960 1300 958 1340 1000 1352"/>
          <path d="M1275 1342L1305 1345 1318 1456 1285 1440z"/><path class="water" d="M1307 1348L1350 1405 1318 1400z"/>
          <path d="M1415 1210L1440 1190 1460 1175 1508 1145V1130H1532L1522 1155 1535 1180 1505 1325 1480 1330 1478 1310 1520 1200 1475 1290 1450 1280 1420 1265zM1435 1282L1470 1305 1425 1345 1415 1362 1375 1365 1360 1350 1415 1320z"/>
          <path class="ln" d="M1445 1195L1475 1240 1470 1290M1460 1225L1525 1160M1420 1247H1440M1488 1300V1325"/>
          <path d="M1060 1515L1085 1520V1540L1062 1545zM1230 1520L1245 1518 1268 1560 1252 1565z"/>
        </g>
        <g class="land" transform="translate(1650 300) scale(.44643 .47194)">
          <path class="bank" d="M290 30L277 80 285 97 313 107 307 135"/><path class="canal" d="M290 30L277 80 285 97 313 107 307 135"/><path class="ln" d="M340 38L315 130"/>
          <path class="water" d="M562 30L575 70 590 90 575 125 580 140 615 147 645 135 710 95 728 30z"/>
          <path class="blk" d="M605 100L612 70 625 72 632 45 645 60 650 90 635 80 620 100zM835 150L850 125 872 130 870 155 850 167zM1005 228l8-5 7 8-8 6zM1063 373l10-6 8 6-8 5z"/>
          <path class="ln" d="M657 38L660 120M672 38L675 108M687 38V60M687 75V100M590 90Q570 140 600 95"/>
          <path d="M645 130L665 110 655 130z"/>
          <path class="water" d="M855 272L880 288 910 282 900 320 868 352 852 370z"/><path class="blk" d="M853 308L895 322 890 345 850 370z"/>
          <path d="M937 295L950 260 985 252 1050 290 1055 305 1035 335 990 310z"/><path class="blk" d="M937 295L952 262 985 268 1045 300 1030 305 990 290 985 302z"/><path class="water" d="M1030 310L1050 296 1052 310 1042 322z"/>
          <path d="M787 370L835 366 833 374H787zM1145 385L1165 392 1190 385 1180 370H1212V380L1195 382 1190 397 1145 395z"/><path class="ln" d="M1140 402Q1130 425 1143 440"/>
          <path d="M513 410L525 430 545 425 590 432 600 430 585 405 598 384 602 405 650 412 700 398 695 406 640 425 665 440 670 470 658 490 640 485 658 472 655 440 600 465 606 482 590 492 565 500 545 465z"/>
          <path d="M490 507L545 485 548 530 515 520zM383 545L440 525V540L385 552zM410 560L445 545 475 570 480 530 515 525 550 540 500 570 475 582 440 590zM445 595L480 590 545 555 565 580 470 637 445 625zM555 595L580 582 635 592 642 625 600 650 555 610z"/>
          <path class="thick" d="M600 405L650 420 690 403M560 470L640 435M480 545L500 530 545 535M430 560L465 585M575 600L605 610 610 640"/>
          <path d="M160 502l10-8 7 6-9 9zM370 700l8 6-3 4zM760 728l6-7 7 7-5 9zM567 788l15-2 22-13 2 15-20 10zM502 1340l15-15 16 15-15 17zM178 828l12-7 11 7-12 8zM228 1005L278 993 290 1030 245 1028z"/>
          <path d="M665 785L708 802 712 855 705 890 632 985 630 1005 600 1020 540 1065 410 1145 408 1160 325 1187 307 1182 305 1145 248 1050 310 1045 325 1020 395 1022 405 993 470 998 540 960 550 925 570 888 640 840z"/>
          <g id="meshArc" clip-path="url(#cArc)"></g>
          <path class="blk" d="M420 1090L450 1050 495 1048 480 1070 430 1095zM355 1115L385 1115 380 1135 350 1132zM600 985L640 930 648 938 610 985zM675 872L703 864 698 888zM562 910L580 892 588 900 567 922zM265 1057L285 1065 305 1115 288 1095z"/>
          <path class="land" d="M668 790L706 805 710 850 672 845 650 810z"/>
        </g>
        <path class="land" d="M1746 942L1761 930 1777 931 1788 938H1795L1804 949 1822 960 1784 994 1735 1040 1724 1051 1707 1079 1664 1132 1627 1183 1610 1220 1581 1271 1564 1293 1538 1355 1517 1388 1498 1421 1485 1454H1458L1472 1432 1485 1417 1498 1386 1512 1353V1324L1529 1293 1604 1176 1638 1113 1656 1066 1672 1035 1690 1031 1707 1018 1713 1000 1717 984 1728 970z"/>
        <g class="land"><path class="ln" d="M1822 960L1860 967 1882 979Q1900 988 1912 1004L1949 1043M1824 964L1860 971 1882 979M1717 984L1715 1020 1705 1041 1691 1031M1668 1046L1680 1050 1676 1075 1658 1072M1660 1062L1678 1065M1676 1075L1674 1090 1662 1125 1638 1113M1645 1098L1668 1101M1524 1312L1540 1325 1545 1308M1512 1330L1540 1332 1534 1350 1512 1345M1540 1332L1520 1370M1512 1345L1520 1371M1725 968L1738 977"/>
          <path class="thick" d="M1604 1176L1617 1183M1583 1207L1596 1211M1571 1229L1579 1235M1560 1248L1567 1253M1947 1041L1949 1043"/>
          <path class="teeth" d="M1710 1080L1668 1134 1631 1185 1614 1221 1584 1274"/></g>
        <g class="land" transform="translate(1030 1000) scale(.57398 .36607)">
          <path d="M172 268L200 275 219 297 215 300 213 450H118L130 390z"/><path class="thick" d="M172 290L165 330M178 345L150 360M175 360L145 380M165 320L158 370M140 400V440"/><path class="ln" d="M270 270L260 315 250 450"/>
          <path d="M211 147l4-9 6 14h-8zM411 226l5-6 4 6-5 6zM421 682l4-7 6 10-4 5zM475 849l4-11 6 12-4 8zM456 1064l4-8 4 8-4 10zM710 1067l4-5 3 5-3 7zM690 287L742 263 748 318 715 331 697 320zM820 388L840 392V405L825 415zM1045 182L1062 178 1072 195 1058 212 1047 200zM1032 293L1050 290V315L1030 318zM780 715L795 707 817 713 803 770zM860 178L857 210 845 240 830 220 838 185z"/><path class="ln" d="M785 735L812 730M785 725H815"/>
        </g>
        <rect x="1107" y="477" width="911" height="911" fill="#0088aa" fill-opacity=".42"/>
        <rect x="1108" y="478" width="909" height="909" fill="none" stroke="#c9f0ee" stroke-opacity=".5" stroke-width="2"/>
      </svg>
    </div>
    <div class="dock"><div class="undo"><svg width="34" height="36"><use href="#undo"/></svg><span>Undo History (Shift+Ctrl+H)</span></div></div>
    <div class="snaps">
      <div class="sn on"><svg><use href="#snap"/></svg></div><hr>
      <div class="sn"><svg><use href="#snap"/></svg></div><div class="sn"><svg><use href="#s1"/></svg></div><div class="sn"><svg><use href="#s2"/></svg></div><div class="sn"><svg><use href="#s3"/></svg></div><div class="sn"><svg><use href="#s4"/></svg></div><hr>
      <div class="sn on"><svg><use href="#snap"/></svg></div><div class="sn"><svg><use href="#s5"/></svg></div><div class="sn"><svg><use href="#s6"/></svg></div><div class="sn on"><svg><use href="#s7"/></svg></div><div class="sn"><svg><use href="#s8"/></svg></div><div class="sn"><svg><use href="#s9"/></svg></div><hr>
      <div class="sn on"><svg><use href="#snap"/></svg></div><div class="sn"><svg><use href="#s10"/></svg></div><div class="sn"><svg><use href="#s11"/></svg></div><div class="sn"><svg><use href="#s12"/></svg></div><hr>
      <div class="sn"><svg><use href="#s13"/></svg></div>
      <i class="right"></i>
    </div>
  </main>

  <div class="palette"><svg class="none" width="26" height="26"><path d="M0 0h26v26H0z" fill="#fff"/><path d="M0 0l26 26M26 0L0 26" stroke="#7c1212" stroke-width="2"/></svg><div id="swatches"></div><i class="left"></i></div>
  <div class="scroll"><i></i></div>

  <footer class="status">
    <div class="fs"><div><span>Fill:</span><span>N/A</span></div><div><span>Stroke:</span><span>N/A</span></div></div>
    <label class="olabel">O:</label>
    <div class="spin op"><span>0</span><i class="updown"><b></b><b></b></i></div>
    <i class="ssep"></i>
    <svg class="eye" width="26" height="22" viewBox="0 0 26 24"><path d="M1 14Q13 5 25 14 13 22 1 14z" fill="#ddd" stroke="#222" stroke-width="2"/><circle cx="13" cy="13" r="4.500"/><path d="M5 8L2 5M10 6L8 2M15 6l2-4M20 8l4-3" stroke="#222" stroke-width="1.500"/></svg>
    <svg class="ulock" width="20" height="24" viewBox="0 0 20 26"><path d="M4 7q2-5 8-4 4 1 3 8" fill="none" stroke="#222" stroke-width="2"/><path d="M2 11h15v12H2z" fill="#fdf3b8" stroke="#333" stroke-width="2"/><path d="M8.500 14h3v5h-3z"/></svg>
    <div class="combo layer">•Layer 7<i class="down"></i></div>
    <span class="msg">Apply clipping path to selection (using the topmost object as clipping path)</span>
    <i class="ssep"></i>
    <div class="xy"><div><span>X:</span><code>427.57</code></div><div><span>Y:</span><code>619.72</code></div></div>
    <label class="zl">Z:</label>
    <div class="zoom"><code>116%</code><i></i><svg width="28" height="32" viewBox="0 0 28 32"><path d="M0 0h28v32H0z" fill="#fff"/><path d="M4 29L26 7M12 29L26 15M20 29l6-6" stroke="#888" stroke-width="2"/></svg></div>
  </footer>

  <div class="menu">
    <div class="r"><svg><use href="#layers"/></svg><span>Objects...</span></div>
    <div class="r"><svg><use href="#selset"/></svg><span>Selection sets...</span></div>
    <hr>
    <div class="r"><svg><use href="#fill"/></svg><span>Fill and Stroke...</span><kbd>Shift+Ctrl+F</kbd></div>
    <div class="r"><svg><use href="#props"/></svg><span>Object Properties...</span><kbd>Shift+Ctrl+O</kbd></div>
    <div class="r"><svg><use href="#shield"/></svg><span>Symbols...</span><kbd>Shift+Ctrl+Y</kbd></div>
    <hr>
    <div class="r"><svg><use href="#group"/></svg><span>Group</span><kbd>Ctrl+G</kbd></div>
    <div class="r"><svg><use href="#ungroup"/></svg><span>Ungroup</span><kbd>Shift+Ctrl+G</kbd></div>
    <div class="r"><svg><use href="#pop"/></svg><span>Pop selected objects out of group</span></div>
    <hr>
    <div class="r p hot"><span>Clip</span><i class="sub"></i></div>
    <div class="r p"><span>Mask</span><i class="sub"></i></div>
    <div class="r p"><span>Pattern</span><i class="sub"></i></div>
    <div class="r p"><span>Objects to Marker</span></div>
    <div class="r p"><span>Objects to Guides</span><kbd>Shift+G</kbd></div>
    <hr>
    <div class="r"><svg><use href="#raise"/></svg><span>Raise</span><kbd>Page Up</kbd></div>
    <div class="r"><svg><use href="#lower"/></svg><span>Lower</span><kbd>Page Down</kbd></div>
    <div class="r"><svg><use href="#top"/></svg><span>Raise to Top</span><kbd>Home</kbd></div>
    <div class="r"><svg><use href="#bottom"/></svg><span>Lower to Bottom</span><kbd>End</kbd></div>
    <hr>
    <div class="r"><svg><use href="#rotcw"/></svg><span>Rotate 90° CW</span></div>
    <div class="r"><svg><use href="#rotccw"/></svg><span>Rotate 90° CCW</span></div>
    <div class="r"><svg><use href="#fliph"/></svg><span>Flip Horizontal</span><kbd>H</kbd></div>
    <div class="r"><svg><use href="#flipv"/></svg><span>Flip Vertical</span><kbd>V</kbd></div>
    <hr>
    <div class="r p"><span>Unhide All</span></div>
    <div class="r p"><span>Unlock All</span></div>
    <hr>
    <div class="r"><svg><use href="#transform"/></svg><span>Transform...</span><kbd>Shift+Ctrl+M</kbd></div>
    <div class="r"><svg><use href="#align"/></svg><span>Align and Distribute...</span><kbd>Shift+Ctrl+A</kbd></div>
    <div class="r"><svg><use href="#arrange"/></svg><span>Arrange...</span></div>
  </div>
  <div class="submenu"><div class="hot">Set</div><div>Release</div></div>
</div>
<script src="script.js"></script>
</body>
</html>
```
FILE: styles.css
```css
* { box-sizing: border-box; }
body { margin: 0; width: 2510px; height: 1574px; overflow: hidden; background: #c6c7c7; font: 23.5px/1 "Noto Sans", sans-serif; letter-spacing: .3px; word-spacing: 4px; color: #2e3436; }
.defs { position: absolute; }
svg { display: block; flex: none; }
i { font-style: normal; flex: none; display: block; }

.macbar { height: 44px; display: flex; align-items: center; background: linear-gradient(90deg, #2d536b, #38566a 45%, #42535f); color: #fff; font: 500 26.5px/44px Inter, sans-serif; letter-spacing: 0; word-spacing: 0; white-space: nowrap; }
.apple { width: 26px; height: 32px; margin: 0 41px 4px 42px; }
.mb-app { width: 149px; font-weight: 700; letter-spacing: 0; }
.mb-2 { width: 195px; }
.mb-3 { width: 88px; }
.mb-4 { width: 138px; }
.tray { margin-left: auto; display: flex; align-items: center; width: 613px; }
.t1 { width: 42px; height: 26px; }
.t2 { width: 30px; height: 30px; margin-left: 15px; }
.t3 { width: 26px; height: 18px; margin-left: 21px; }
.t4 { width: 36px; height: 32px; margin-left: 34px; }
.t5 { width: 42px; height: 30px; margin-left: 31px; }
.t6 { width: 17px; height: 24px; margin-left: 20px; }
.t7 { width: 54px; margin-left: 44px; font-size: 24px; letter-spacing: -.8px; }
.t8 { width: 46px; height: 24px; margin-left: 1px; }
.t9 { width: 32px; height: 22px; margin-left: 31px; }
.t10 { margin-left: 33px; }

.window { position: relative; width: 2507px; height: 1530px; display: flex; flex-direction: column; background: #e8e8e6; border-radius: 10px 10px 0 0; border-right: 1px solid #aaa; border-bottom: 3px solid #3b3b3b; overflow: hidden; }
.titlebar { flex: none; height: 44px; display: flex; align-items: center; padding: 2px 0 0 16px; gap: 16px; background: #f6f6f6; border-bottom: 2px solid #d0d0ce; }
.light { width: 24px; height: 24px; border-radius: 50%; background: #dcdcdc; border: 1px solid #cacaca; }
.title { display: flex; align-items: center; gap: 15px; margin-left: 930px; color: #656565; white-space: nowrap; font-size: 24px; letter-spacing: .6px; }
.menubar { flex: none; height: 46px; display: flex; border-bottom: 2px solid #d0d0ce; line-height: 46px; text-align: center; }
.active { color: #3f84d3; border-bottom: 6px solid #4a90d9; height: 46px; }
.w69 { width: 69px; } .w75 { width: 75px; } .w86 { width: 86px; } .w94 { width: 94px; } .w110 { width: 110px; }
.w82 { width: 82px; } .w99 { width: 99px; } .w154 { width: 154px; } .w84 { width: 84px; } .w54 { width: 54px; } .w50 { width: 50px; }

.ic { width: 32px; height: 32px; flex: none; }
.vs { width: 2px; height: 34px; margin: 0 -1px; background: #d3d3d1; }
.commands { flex: none; height: 72px; display: flex; align-items: center; gap: 24px; padding-left: 20px; }
.gapbig { width: 688px; }
.bigT { font: bold 46px/33px "Liberation Serif", serif; color: #000; text-align: center; letter-spacing: 0; }
.options { flex: none; height: 76px; display: flex; align-items: center; }
.optleft { width: 944px; display: flex; gap: 24px; padding-left: 20px; }
.dim { opacity: .8; }
.spin { width: 152px; height: 54px; display: flex; border: 2px solid #b9bab8; border-radius: 6px; background: #f3f3f2; color: #a2a5a5; overflow: hidden; align-items: center; font-size: 22px; letter-spacing: 0; margin-bottom: 2px; }
.spin span { flex: 1; padding-left: 19px; }
.updown { width: 25px; height: 100%; border-left: 2px solid #dcdcda; display: flex; flex-direction: column; }
.updown b { flex: 1; display: flex; align-items: center; justify-content: center; }
.updown b:first-child { border-bottom: 2px solid #dcdcda; }
.updown b::after { content: ""; border: 8px solid transparent; border-top: 0; border-bottom: 9px solid #8b8e8f; }
.updown b:last-child::after { border-bottom: 0; border-top: 9px solid #8b8e8f; }
.dimlabel { text-align: center; color: #9b9e9e; text-shadow: 1px 1px #fff; font-size: 21px; letter-spacing: 0; }
.tog { width: 52px; height: 56px; border: 2px solid #b9bab8; border-radius: 6px; background: #d9d9d7; display: flex; align-items: center; justify-content: center; margin-left: 4px; }
.tog .ic { width: 29px; height: 29px; }
.combo { height: 44px; display: flex; align-items: center; justify-content: space-between; border: 2px solid #b4b5b2; border-radius: 6px; background: linear-gradient(#ededec, #d2d2d0); }
.cm { width: 86px; margin-left: 4px; padding: 0 10px 0 9px; border-bottom-color: #95958f; font-size: 21px; letter-spacing: -.8px; }
.down { border: 9px solid transparent; border-top: 10px solid #2e3436; border-bottom: 0; }
.vs.tall { margin: 0 11px 0 12px; }

.work { flex: none; height: 1170px; display: flex; }
.toolbox { width: 76px; padding: 8px 0 0 10px; }
.tool { width: 60px; height: 60px; margin: 2px 0 4px; display: flex; align-items: center; justify-content: center; }
.tool svg { width: 48px; height: 48px; }
.on { background: #d9d9d7; box-shadow: inset 0 0 0 2px #b9bab8; border-radius: 7px; }
.right { width: 0; border: 10px solid transparent; border-left-color: #2e3436; border-right: 0; }
.toolbox .right { margin: 13px 0 0 26px; }
.vcol { width: 42px; }
.corner { height: 36px; padding: 4px 0 0 10px; }
.canvas { background: #fff; }
.center { width: 2224px; }
#hruler text { font-size: 15.500px; letter-spacing: -.2px; fill: #4a4f51; }
#vruler text { font-size: 14.500px; letter-spacing: 0; fill: #4a4f51; }
.land path, path.land { fill: #bfcf4d; stroke: #222; stroke-width: 2.400px; vector-effect: non-scaling-stroke; stroke-linejoin: round; }
.land .ln { fill: none; }
.land .thick { fill: none; stroke-width: 4px; }
.land .mesh { fill: none; stroke-width: 2.400px; }
.land .water { fill: #fff; }
.land .blk { fill: #222; }
.land .bank { fill: none; stroke-width: 6.500px; }
.land .canal { fill: none; stroke: #fff; stroke-width: 2.500px; }
.land .teeth { fill: none; stroke-width: 7px; stroke-dasharray: 2 4; }
.dock { width: 94px; margin-left: 8px; border-left: 2px solid #b7b8b6; padding: 18px 0 0 29px; }
.undo { writing-mode: vertical-rl; transform: rotate(180deg); display: flex; align-items: center; width: 34px; font-size: 23.500px; white-space: nowrap; letter-spacing: .5px; }
.undo svg { transform: rotate(180deg); }
.snaps { width: 62px; padding: 10px 0 0; display: flex; flex-direction: column; gap: 4px; }
.sn { width: 52px; height: 52px; flex: none; display: flex; align-items: center; justify-content: center; }
.sn svg { width: 32px; height: 32px; }
.snaps hr { width: 32px; height: 2px; margin: 9px 0 9px 10px; border: 0; background: #d0d0ce; flex: none; }
.snaps .right { margin: 50px 0 0 22px; }

.palette { flex: none; height: 32px; display: flex; padding: 2px 0 4px 2px; }
#swatches { display: flex; width: 2452px; overflow: hidden; }
#swatches i { width: 26px; height: 26px; }
.left { width: 0; height: 20px; margin: 1px 0 0 8px; border: 10px solid transparent; border-right-color: #2e3436; border-left: 0; }
.scroll { flex: none; width: 2482px; height: 26px; background: #c3c5c4; border-top: 2px solid #b2b4b2; padding: 6px; }
.scroll i { width: 534px; height: 12px; border-radius: 6px; background: #777a7a; }

.status { flex: none; height: 61px; display: flex; align-items: center; white-space: nowrap; }
.fs { width: 252px; padding: 2px 0 0 3px; font-size: 20.500px; letter-spacing: .5px; }
.fs div { display: flex; height: 28px; align-items: center; }
.fs span:first-child { width: 139px; }
.olabel { width: 30px; padding: 2px 0 0 2px; font-size: 21px; }
.op { width: 92px; height: 52px; margin: 3px 7px 0 0; }
.ssep { width: 2px; height: 57px; background: #d0d0ce; }
.eye { margin-left: 17px; }
.ulock { margin: 0 19px 0 34px; }
.layer { width: 158px; height: 52px; margin-top: 3px; padding: 0 19px; font-size: 21px; font-weight: 500; letter-spacing: .1px; word-spacing: 0; }
.msg { width: 1578px; padding: 4px 0 0 3px; letter-spacing: .2px; word-spacing: 3.5px; }
.xy { width: 128px; padding: 2px 0 0 6px; }
.xy div { display: flex; height: 29px; align-items: center; gap: 14px; letter-spacing: 0; font-size: 21px; }
.xy span { width: 22px; }
code { font: 20px/1 "DejaVu Sans Mono", monospace; letter-spacing: 0; word-spacing: 0; }
.zl { width: 29px; padding: 2px 0 0 3px; font-size: 21px; }
.zoom { position: relative; width: 108px; height: 53px; margin-top: 2px; background: #fff; border: 2px solid #b9bab8; border-radius: 6px; padding: 14px 0 0 24px; color: #000; }
.zoom i { position: absolute; right: 2px; top: 8px; border: 9px solid transparent; border-top: 0; border-bottom: 9px solid #2e3436; }
.zoom svg { position: absolute; right: -3px; bottom: -2px; border-left: 2px solid #ccc; border-top: 2px solid #ccc; }

.menu { position: absolute; left: 324px; top: 90px; width: 714px; height: 1332px; background: #fff; border: 2px solid #b4b5b2; padding: 2px 0; }
.menu hr { height: 2px; margin: 0; border: 0; background: #e3e3e3; }
.r { height: 52px; display: flex; align-items: center; padding: 0 15px 0 10px; white-space: nowrap; }
.r svg { width: 32px; height: 32px; margin-right: 20px; }
.r span, kbd { padding-bottom: 3px; }
.p { height: 46px; padding-left: 62px; }
.p span, .p kbd { padding-bottom: 0; }
kbd { margin-left: auto; font: inherit; letter-spacing: .9px; }
.sub { margin-left: auto; border: 10px solid transparent; border-left-color: #2e3436; border-right: 0; }
.hot { background: #4a90d9; color: #fff; }
.r.hot { margin: 0 -2px; padding-left: 64px; padding-right: 17px; }
.hot .sub { border-left-color: #fff; }
.submenu { position: absolute; left: 1034px; top: 512px; width: 204px; height: 100px; background: #fff; border: 2px solid #b4b5b2; padding: 2px 0; line-height: 46px; }
.submenu div { padding-left: 55px; height: 46px; }
.submenu .hot { margin: 0 -2px; padding-left: 57px; }
```
FILE: script.js
```js
const NS = 'http://www.w3.org/2000/svg';
function add(parent, name, attrs, text) {
  const el = document.createElementNS(NS, name);
  for (const k in attrs) el.setAttribute(k, attrs[k]);
  if (text !== undefined) el.textContent = text;
  parent.appendChild(el);
  return el;
}

// Horizontal ruler: a labelled tick every 50 units, ten steps between labels
const h = document.getElementById('hruler');
let d = 'M120 317H2340';
for (let k = -2; k < 190; k++) {
  const x = Math.round(151 + k * 11.557);
  if (x > 2338) break;
  const m = ((k % 10) + 10) % 10;
  d += `M${x} ${m === 0 ? 286 : m % 2 ? 308 : 302}V317`;
  if (m === 0) add(h, 'text', { x: x + 4, y: 301 }, 350 + k * 5);
}
add(h, 'path', { d, stroke: '#2e3436', 'stroke-width': 2 });

// Vertical ruler: labels are stacked digit by digit
const v = document.getElementById('vruler');
d = 'M117 320V1450';
for (let k = -4; k < 45; k++) {
  const y = Math.round(417 + k * 23.1);
  if (y > 1448) break;
  const m = ((k % 10) + 10) % 10;
  d += `M${m === 0 ? 86 : m % 2 ? 108 : 102} ${y}H117`;
  if (m === 0) {
    const t = add(v, 'text', { y: y + 15 });
    [...String(600 - k * 10)].forEach((c, i) => add(t, 'tspan', { x: 86, dy: i ? 16 : 0 }, c));
  }
}
add(v, 'path', { d, stroke: '#2e3436', 'stroke-width': 2 });
add(v, 'path', { d: 'M106 358l11 10-11 10z', fill: '#2e3436' });

// Inkscape default palette
const colours = `000 1a1a1a 333 4d4d4d 666 808080 999 b3b3b3 ccc e6e6e6 ececec f2f2f2 f9f9f9 fff
800000 f00 808000 ff0 008000 0f0 008080 0ff 000080 00f 800080 f0f
2b0000 550000 800000 a00 d40000 f00 ff2a2a f55 ff8080 faa ffd5d5
280b0b 501616 782121 a02c2c c83737 d35f5f de8787 e9afaf f4d7d7
241c1c 483737 6c5353 916f6f ac9393 c8b7b7 e3dbdb
2b1100 520 803300 a40 d45500 f60 ff7f2a f95 ffb380 fca ffe6d5
28170b 502d16 784421 a05a2c c87137 d38d5f deaa87 e9c6af f4e3d7
241f1c 483e37 6c5d53 917c6f ac9d93 c8beb7 e3dedb
2b2200 540 806600 a80 d4aa00 fc0 ffd42a fd5 ffe680 fea fff6d5
28220b 504416 786721 a0892c`.split(/\s+/);
const sw = document.getElementById('swatches');
for (const c of colours) {
  const i = document.createElement('i');
  i.style.background = '#' + c;
  sw.appendChild(i);
}

// Street blocks inside the dense islands: an irregular grid with gaps
function mesh(id, x0, y0, x1, y1, step, keep) {
  let s = 7;
  const r = () => (s = (s * 16807) % 2147483647) / 2147483647;
  const cols = Math.ceil((x1 - x0) / step), rows = Math.ceil((y1 - y0) / step);
  const p = [];
  for (let j = 0; j <= rows; j++) {
    p.push([]);
    for (let i = 0; i <= cols; i++) p[j].push([x0 + (i + r() - .5) * step, y0 + (j + r() - .5) * step]);
  }
  let path = '';
  for (let j = 0; j < rows; j++) for (let i = 0; i < cols; i++) {
    const a = p[j][i].map(Math.round);
    if (r() < keep) path += `M${a}L${p[j][i + 1].map(Math.round)}`;
    if (r() < keep) path += `M${a}L${p[j + 1][i].map(Math.round)}`;
  }
  add(document.getElementById(id), 'path', { d: path, class: 'mesh' });
}
mesh('meshVen', 830, 1090, 1360, 1460, 21, .68);
mesh('meshArc', 240, 780, 720, 1200, 17, .72);
```
